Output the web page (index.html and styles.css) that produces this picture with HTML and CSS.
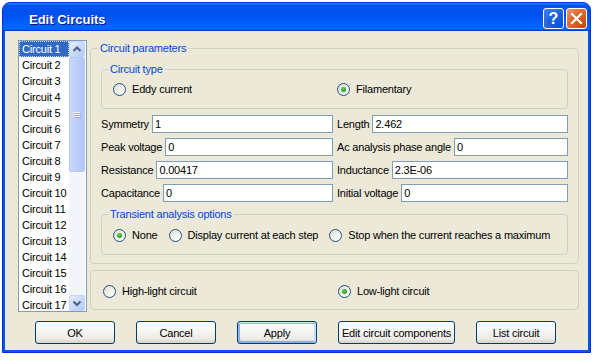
FILE: index.html
```html
<!DOCTYPE html>
<html>
<head>
    <meta charset="UTF-8">
    <title>Edit Circuits</title>
    <link rel="stylesheet" href="styles.css">
</head>
<body>
    <div class="window">
        <div class="titlebar">
            <span class="title">Edit Circuits</span>
            <div class="title-buttons">
                <span class="tb-btn help">?</span>
                <span class="tb-btn close">
                    <svg width="13" height="13" viewBox="0 0 13 13">
                        <path d="M2 2 L11 11 M11 2 L2 11" stroke="#fff" stroke-width="2.2" stroke-linecap="square"/>
                    </svg>
                </span>
            </div>
        </div>

        <div class="client">
            <div class="main">
                <div class="listbox">
                    <ul class="items">
                        <li class="selected">Circuit 1</li>
                        <li>Circuit 2</li>
                        <li>Circuit 3</li>
                        <li>Circuit 4</li>
                        <li>Circuit 5</li>
                        <li>Circuit 6</li>
                        <li>Circuit 7</li>
                        <li>Circuit 8</li>
                        <li>Circuit 9</li>
                        <li>Circuit 10</li>
                        <li>Circuit 11</li>
                        <li>Circuit 12</li>
                        <li>Circuit 13</li>
                        <li>Circuit 14</li>
                        <li>Circuit 15</li>
                        <li>Circuit 16</li>
                        <li>Circuit 17</li>
                    </ul>
                    <div class="scrollbar">
                        <div class="sb-btn">
                            <svg width="14" height="14" viewBox="0 0 14 14">
                                <path d="M3.5 9 L7 5.5 L10.5 9" fill="none" stroke="#4d6185" stroke-width="2"/>
                            </svg>
                        </div>
                        <div class="sb-thumb">
                            <svg width="8" height="8" viewBox="0 0 8 8">
                                <path d="M0 1.5 H7 M0 3.5 H7 M0 5.5 H7" stroke="#eef4fe" stroke-width="1"/>
                                <path d="M1 2.5 H8 M1 4.5 H8 M1 6.5 H8" stroke="#8cb0f8" stroke-width="1"/>
                            </svg>
                        </div>
                        <div class="sb-track"></div>
                        <div class="sb-btn">
                            <svg width="14" height="14" viewBox="0 0 14 14">
                                <path d="M3.5 5.5 L7 9 L10.5 5.5" fill="none" stroke="#4d6185" stroke-width="2"/>
                            </svg>
                        </div>
                    </div>
                </div>

                <div class="panel">
                    <fieldset class="group params">
                        <legend>Circuit parameters</legend>

                        <fieldset class="group sub type">
                            <legend>Circuit type</legend>
                            <div class="radio-row type-row">
                                <label class="opt"><span class="radio"></span>Eddy current</label>
                                <label class="opt"><span class="radio checked"></span>Filamentary</label>
                            </div>
                        </fieldset>

                        <div class="fields">
                            <div class="field"><span>Symmetry</span><input type="text" value="1"></div>
                            <div class="field"><span>Length</span><input type="text" value="2.462"></div>
                            <div class="field"><span>Peak voltage</span><input type="text" value="0"></div>
                            <div class="field"><span>Ac analysis phase angle</span><input type="text" value="0"></div>
                            <div class="field"><span>Resistance</span><input type="text" value="0.00417"></div>
                            <div class="field"><span>Inductance</span><input type="text" value="2.3E-06"></div>
                            <div class="field"><span>Capacitance</span><input type="text" value="0"></div>
                            <div class="field"><span>Initial voltage</span><input type="text" value="0"></div>
                        </div>

                        <fieldset class="group sub transient">
                            <legend>Transient analysis options</legend>
                            <div class="radio-row transient-row">
                                <label class="opt"><span class="radio checked"></span>None</label>
                                <label class="opt"><span class="radio"></span>Display current at each step</label>
                                <label class="opt"><span class="radio"></span>Stop when the current reaches a maximum</label>
                            </div>
                        </fieldset>
                    </fieldset>

                    <div class="group light">
                        <div class="radio-row light-row">
                            <label class="opt"><span class="radio"></span>High-light circuit</label>
                            <label class="opt"><span class="radio checked"></span>Low-light circuit</label>
                        </div>
                    </div>
                </div>
            </div>

            <div class="buttons">
                <button class="btn">OK</button>
                <button class="btn">Cancel</button>
                <button class="btn default">Apply</button>
                <button class="btn wide">Edit circuit components</button>
                <button class="btn">List circuit</button>
            </div>
        </div>
    </div>
</body>
</html>
```

FILE: styles.css
```css
body {
    margin: 0;
    padding: 2px 0 0 2px;
    background-color: #fff;
    font-family: 'Liberation Sans', Arial, sans-serif;
    font-size: 11px;
    letter-spacing: -0.2px;
    color: #000;
}
.window {
    width: 589px;
    height: 351px;
    box-sizing: border-box;
    background-color: #0055ea;
    border: 1px solid #0831d9;
    border-radius: 8px 8px 0 0;
    display: flex;
    flex-direction: column;
    overflow: hidden;
}
.titlebar {
    height: 28px;
    flex: none;
    display: flex;
    align-items: center;
    justify-content: space-between;
    padding: 0 3px 0 26px;
    background: linear-gradient(180deg, #0997ff 0%, #0053ee 8%, #0050ee 40%, #0066ff 88%, #0066ff 93%, #005bff 95%, #003dd7 96%, #003dd7 100%);
}
.title {
    color: #fff;
    font-weight: bold;
    font-size: 13px;
    letter-spacing: 0;
    padding-top: 4px;
    text-shadow: 1px 1px #0f1089;
}
.title-buttons {
    display: flex;
    gap: 2px;
    padding-top: 3px;
}
.tb-btn {
    width: 21px;
    height: 21px;
    box-sizing: border-box;
    border: 1px solid #fff;
    border-radius: 3px;
    display: flex;
    align-items: center;
    justify-content: center;
    color: #fff;
}
.help {
    background: radial-gradient(circle at 90% 90%, #0054e9 0%, #2263d5 55%, #4483ef 100%);
    font-weight: bold;
    font-size: 16px;
    letter-spacing: 0;
}
.close {
    background: radial-gradient(circle at 90% 90%, #cc4600 0%, #dc6527 55%, #f09773 100%);
}
.client {
    flex: 1;
    margin: 0 2px 2px 2px;
    background-color: #ece9d8;
    display: flex;
    flex-direction: column;
}
.main {
    display: flex;
    align-items: flex-start;
    padding-left: 13px;
    gap: 3px;
}
.listbox {
    width: 69px;
    height: 272px;
    margin-top: 9px;
    box-sizing: border-box;
    border: 1px solid #7f9db9;
    background-color: #fff;
    display: flex;
    overflow: hidden;
}
.items {
    list-style: none;
    margin: 0;
    padding: 0;
    width: 50px;
    flex: none;
}
.items li {
    height: 16px;
    line-height: 16px;
    padding-left: 3px;
    white-space: nowrap;
    overflow: hidden;
}
.items li.selected {
    background-color: #316ac5;
    color: #fff;
    outline: 1px dotted #c8d4ec;
    outline-offset: -1px;
}
.scrollbar {
    width: 16px;
    flex: none;
    display: flex;
    flex-direction: column;
    background-color: #f1f4fc;
}
.sb-btn {
    height: 16px;
    flex: none;
    box-sizing: border-box;
    border: 1px solid #c3d3fd;
    border-radius: 2px;
    background: linear-gradient(135deg, #e6eefc 0%, #c6d7fa 60%, #b4c9f4 100%);
    display: flex;
    align-items: center;
    justify-content: center;
}
.sb-thumb {
    height: 115px;
    flex: none;
    box-sizing: border-box;
    border: 1px solid #b6c9f4;
    border-radius: 2px;
    background: linear-gradient(90deg, #c9d8fc 0%, #bccffa 50%, #b1c7f7 100%);
    display: flex;
    align-items: center;
    justify-content: center;
}
.sb-track {
    flex: 1;
    background-color: #f3f5fb;
}
.panel {
    width: 489px;
    margin-top: 10px;
}
.group {
    margin: 0;
    border: 1px solid #d0d0bf;
    border-radius: 4px;
    min-width: 0;
}
.group legend {
    color: #0046d5;
    padding: 0 2px;
    line-height: 14px;
}
.params {
    padding: 7px 10px 8px 10px;
}
.params > legend {
    margin-left: -3px;
}
.sub {
    padding: 5px 0 11px 11px;
}
.sub > legend {
    margin-left: -5px;
}
.transient {
    margin-top: 5px;
    padding-top: 6px;
}
.radio-row {
    height: 16px;
    display: flex;
    align-items: center;
}
.opt {
    display: flex;
    align-items: center;
    gap: 6px;
    white-space: nowrap;
}
.type-row .opt:first-child {
    width: 224px;
}
.transient-row {
    gap: 11px;
}
.light {
    margin-top: 6px;
    padding: 12px 0 10px 12px;
}
.light-row .opt:first-child {
    width: 235px;
}
.radio {
    width: 13px;
    height: 13px;
    box-sizing: border-box;
    border: 1px solid #1c5180;
    border-radius: 50%;
    background: linear-gradient(135deg, #dcdbd2 0%, #f4f3ee 60%, #fff 100%);
    display: flex;
    align-items: center;
    justify-content: center;
    flex: none;
}
.radio.checked::after {
    content: '';
    width: 5px;
    height: 5px;
    border-radius: 50%;
    background: radial-gradient(circle at 40% 40%, #55d551 0%, #21a121 70%, #1a8a1a 100%);
}
.fields {
    margin-top: 6px;
    display: grid;
    grid-template-columns: 232px minmax(0, 1fr);
    column-gap: 4px;
    row-gap: 5px;
}
.field {
    display: flex;
    align-items: center;
    gap: 3px;
    min-width: 0;
    white-space: nowrap;
}
.field input {
    flex: 1;
    width: 0;
    min-width: 0;
    height: 18px;
    box-sizing: border-box;
    margin: 0;
    padding: 0 2px;
    border: 1px solid #7f9db9;
    background-color: #fff;
    font: inherit;
    letter-spacing: inherit;
    color: #000;
    outline: none;
}
.buttons {
    display: flex;
    gap: 21px;
    padding: 9px 0 0 30px;
}
.btn {
    width: 80px;
    height: 23px;
    box-sizing: border-box;
    padding: 0;
    border: 1px solid #003c74;
    border-radius: 3px;
    background: linear-gradient(180deg, #fff 0%, #f4f4f0 50%, #ecebe5 80%, #d8d2c6 100%);
    font: inherit;
    letter-spacing: inherit;
    color: #000;
}
.btn.wide {
    width: 117px;
}
.btn.default {
    box-shadow: inset -1px 1px #cee7ff, inset 1px 2px #98b8ea, inset -2px 2px #bcd4f6, inset 1px -1px #89ade4, inset 2px -2px #89ade4;
}
```
